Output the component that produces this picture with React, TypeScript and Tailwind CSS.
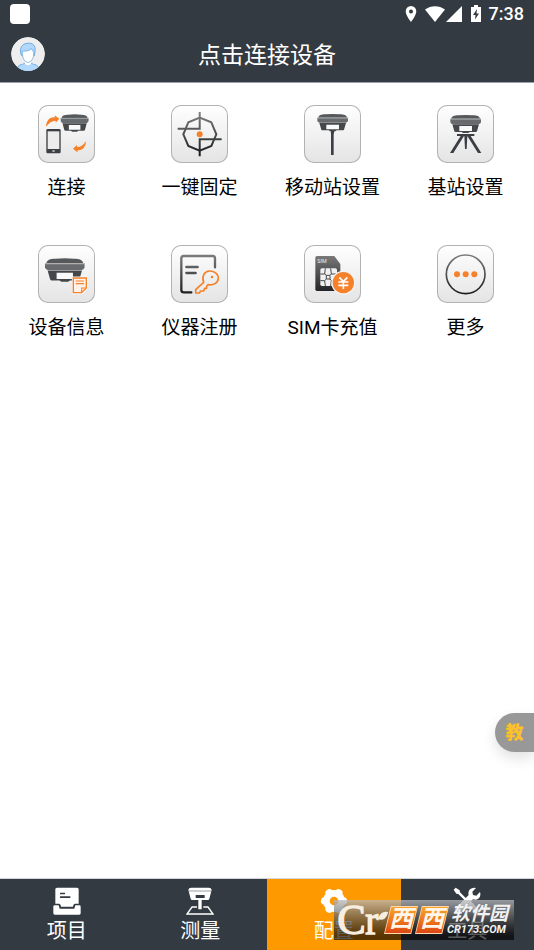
import type { ReactNode } from 'react';

const DARK = '#3b3f44';
const ORANGE = '#f5822b';

// Shared gradient used for the dark strokes of the tile icons
const InkGradient = ({ id }: { id: string }) => (
    <defs>
        <linearGradient id={id} gradientUnits="userSpaceOnUse" x1="0" y1="24" x2="0" y2="150">
            <stop offset="0" stopColor="#808080" />
            <stop offset="1" stopColor="#191b1e" />
        </linearGradient>
    </defs>
);

const TileSvg = ({ children }: { children: ReactNode }) => (
    <svg viewBox="0 0 171 174" className="size-full" fill="none" aria-hidden="true">
        {children}
    </svg>
);

// GNSS receiver head, drawn in a 92x52 box
const Receiver = ({ transform }: { transform: string }) => (
    <g transform={transform}>
        <path d="M3 11C4 4 12 1 24 1Q46 -1 68 1C80 1 88 4 89 11Z" fill="#56595c" />
        <path d="M0 11H92V20Q91 25 86 26H6Q1 25 0 20Z" fill="#686b6e" />
        <path d="M0 12H92" stroke="#c4c4c4" strokeWidth="2" />
        <path d="M6 27H86L80 47Q79 49 76 49H58L54 52H38L34 49H16Q13 49 12 47Z" fill="#45484b" />
        <path d="M27 32H65V46H27Z" fill="#fafafa" />
    </g>
);

const ConnectIcon = () => (
    <TileSvg>
        <Receiver transform="translate(68 28) scale(.91 1)" />
        <path d="M24 65C25 44 38 35 51 37L50 31L64 41L53 53V47C42 47 33 53 24 65Z" fill={ORANGE} />
        <path d="M143 108C145 126 133 136 119 136L118 142L105 131L117 120V126C129 126 137 120 143 108Z" fill={ORANGE} />
        <rect x="25" y="72" width="43" height="73" rx="4" fill={DARK} />
        <rect x="29" y="79" width="35" height="53" fill="#ececec" />
        <rect x="43" y="136" width="7" height="4" fill="#ddd" />
    </TileSvg>
);

const FixIcon = () => (
    <TileSvg>
        <InkGradient id="ink-fix" />
        <g stroke="url(#ink-fix)" strokeWidth="6">
            <path d="M86 38L52 52L37 88L52 123L86 137L121 123L136 88L121 52Z" strokeWidth="6" />
            <path d="M20 71H86.1V21" />
            <path d="M86.1 154V103H152" />
        </g>
        <circle cx="86" cy="88" r="9" fill={ORANGE} />
    </TileSvg>
);

const RoverIcon = () => (
    <TileSvg>
        <path d="M80 76H92L89 88V150H81V88Z" fill={DARK} />
        <Receiver transform="translate(40 27)" />
    </TileSvg>
);

const BaseIcon = () => (
    <TileSvg>
        <path d="M60 87H112V93H60Z" fill={DARK} />
        <path d="M71 93H81L49 144H39ZM91 93H101L133 144H123ZM82 93H91L89 132H84Z" fill={DARK} />
        <Receiver transform="translate(40 30) scale(1 1.04)" />
    </TileSvg>
);

const DeviceInfoIcon = () => (
    <TileSvg>
        <Receiver transform="translate(21 40) scale(1.29 1.35)" />
        <path d="M106 99H145V129L131 143H106Z" fill="#fff1e6" stroke="#f8f8f8" strokeWidth="9" />
        <path d="M106 99H145V129L131 143H106Z" fill="#fff1e6" stroke={ORANGE} strokeWidth="4" />
        <path d="M113 108H138M113 116H138M131 142V129H144" stroke={ORANGE} strokeWidth="3.5" />
    </TileSvg>
);

const RegisterIcon = () => (
    <TileSvg>
        <InkGradient id="ink-reg" />
        <g stroke="url(#ink-reg)" strokeWidth="7" strokeLinecap="round">
            <path d="M132 67V40Q132 33 125 33H38Q31 33 31 40V134Q31 142 39 142H61" />
            <path d="M46 66.1H80M46 84.1L74 84" />
        </g>
        <path
            d="M98 112C91 94 100 79 115 78C129 77 142 86 142 100C141 114 127 122 111 119L107 124V130H101L98 138H89L85 144H74V134Z"
            stroke={ORANGE}
            strokeWidth="5"
            strokeLinejoin="round"
        />
        <circle cx="123" cy="96" r="4" fill={ORANGE} />
    </TileSvg>
);

const SimIcon = () => (
    <TileSvg>
        <InkGradient id="ink-sim" />
        <path d="M39 33H91L109 57V138H39Q34 138 34 133V38Q34 33 39 33Z" fill="url(#ink-sim)" />
        <rect x="49" y="70" width="50" height="53" rx="5" fill="#f1f1f1" />
        <path
            d="M49 87H62L67 91V102L62 107H49M99 87H82L78 91V102L82 107H99M67 91H78M67 102H78M62 87L64 70M82 87L80 70M62 107L64 123M82 107L80 123"
            stroke="#44474a"
            strokeWidth="3"
        />
        <text x="40" y="53" fontSize="16" fill="#eee" fontFamily="Roboto, sans-serif">SIM</text>
        <circle cx="118" cy="113" r="34" fill={ORANGE} stroke="#f4f4f4" strokeWidth="4" />
        <path d="M106 97L118 110L130 97M118 110V132M103 111H133M103 121H133" stroke="#fff" strokeWidth="5" />
    </TileSvg>
);

const MoreIcon = () => (
    <TileSvg>
        <InkGradient id="ink-more" />
        <circle cx="86" cy="88" r="58" stroke="url(#ink-more)" strokeWidth="5" />
        <circle cx="60" cy="88" r="9" fill={ORANGE} />
        <circle cx="86" cy="88" r="9" fill={ORANGE} />
        <circle cx="112" cy="88" r="9" fill={ORANGE} />
    </TileSvg>
);

const tiles = [
    { label: '连接', icon: <ConnectIcon /> },
    { label: '一键固定', icon: <FixIcon /> },
    { label: '移动站设置', icon: <RoverIcon /> },
    { label: '基站设置', icon: <BaseIcon /> },
    { label: '设备信息', icon: <DeviceInfoIcon /> },
    { label: '仪器注册', icon: <RegisterIcon /> },
    { label: 'SIM卡充值', icon: <SimIcon /> },
    { label: '更多', icon: <MoreIcon /> },
];

const ProjectIcon = () => (
    <svg viewBox="0 0 84 84" className="size-7" aria-hidden="true">
        <path fillRule="evenodd" fill="#fff" d="M12 2H72Q77 2 77 7V50H66Q62 50 61 55L60 59H24L23 55Q22 50 18 50H7V7Q7 2 12 2ZM21 17V22H36V17ZM21 28V33H52V28Z" />
        <path fill="#fff" d="M5 55H17L20 65H64L67 55H79Q83 55 83 59V79Q83 83 79 83H5Q1 83 1 79V59Q1 55 5 55Z" />
    </svg>
);

const SurveyIcon = () => (
    <svg viewBox="0 0 84 84" className="size-7" aria-hidden="true">
        <path fill="#fff" d="M7 9Q8 2 16 2H68Q76 2 77 9V11H7ZM8 13H76L70 35Q69 39 66 39H47V67H37V39H18Q15 39 14 35Z" />
        <path fill="#343a42" d="M29 24H56V33H29Z" />
        <path fill="none" stroke="#fff" strokeWidth="4" d="M33 60H18L3 81H81L66 60H52" />
    </svg>
);

const GearIcon = () => (
    <svg viewBox="0 0 84 84" className="size-7" fill="none" stroke="#fff" aria-hidden="true">
        <circle cx="42" cy="42" r="23" strokeWidth="20" />
        <path strokeWidth="23" strokeLinecap="round" d="M68 42H70M14 42H16M55 64.5L56 66.2M29 64.5L28 66.2M55 19.5L56 17.8M29 19.5L28 17.8" />
    </svg>
);

const ToolsIcon = () => (
    <svg viewBox="0 0 84 84" className="size-7" aria-hidden="true">
        <path fill="#fff" d="M2 8L8 2L20 10L21 16L42 37L37 42L16 21L10 20ZM48 48L54 43L79 68Q83 73 79 78Q73 83 68 79L44 55Z" />
        <path fill="#fff" d="M69 3L58 14L60 24L70 26L81 15Q85 29 76 35Q69 40 60 37L25 72Q18 83 9 78Q2 72 7 63L12 59L47 24Q44 14 51 7Q59 0 69 3Z" />
    </svg>
);

const tabs = [
    { label: '项目', icon: <ProjectIcon />, active: false },
    { label: '测量', icon: <SurveyIcon />, active: false },
    { label: '配置', icon: <GearIcon />, active: true },
    { label: '工具', icon: <ToolsIcon />, active: false },
];

const StatusBar = () => (
    <div className="flex h-[27px] items-center justify-between px-[10px]">
        <span className="size-5 rounded bg-white" />
        <div className="flex items-center text-white">
            <svg viewBox="0 0 12 16" className="mr-2 h-4 w-3" aria-label="Location">
                <path fill="currentColor" fillRule="evenodd" d="M6 0A5.3 5.3 0 0 0 .7 5.3C.7 9.5 6 16 6 16S11.3 9.5 11.3 5.3A5.3 5.3 0 0 0 6 0ZM6 3.4A2 2 0 1 1 6 7.4A2 2 0 0 1 6 3.4Z" />
            </svg>
            <svg viewBox="0 0 20 16" className="mr-px h-4 w-5" aria-label="Wi-Fi">
                <path fill="currentColor" d="M0 3.5C6 -1 14 -1 20 3.5L10 16Z" />
            </svg>
            <svg viewBox="0 0 16 16" className="mr-[9px] size-4" aria-label="Signal">
                <path fill="currentColor" d="M16 0V16H0Z" />
            </svg>
            <svg viewBox="0 0 10 17" className="mr-2 h-[17px] w-[10px]" aria-label="Charging">
                <path fill="currentColor" fillRule="evenodd" d="M3 0H7V2H10V17H0V2H3ZM6 4L2 10H4.5L4 14.5L8 8.5H5.5Z" />
            </svg>
            <time className="font-[Roboto,sans-serif] text-lg leading-[26px] font-medium">7:38</time>
        </div>
    </div>
);

const Avatar = () => (
    <svg viewBox="0 0 102 102" className="size-[34px]" aria-hidden="true">
        <clipPath id="avatar-clip"><circle cx="51" cy="51" r="51" /></clipPath>
        <g clipPath="url(#avatar-clip)">
            <circle cx="51" cy="51" r="51" fill="#eeeeef" />
            <path d="M20 104V91Q22 83 34 82L42 78H60L68 82Q80 83 82 91V104Z" fill="#b2d8fb" stroke="#5c9fd9" strokeWidth="2" />
            <path d="M42 70V80Q51 90 60 80V70Z" fill="#fff" />
            <path d="M30 52C25 33 33 20 49 19C65 16 75 26 72 44L70 56H32Z" fill="#b2d8fb" stroke="#5c9fd9" strokeWidth="2.5" />
            <path d="M34 43Q54 43 62 35L68 46C69 65 60 76 51 76C41 76 33 63 34 43Z" fill="#fff" stroke="#5c9fd9" strokeWidth="2" />
        </g>
    </svg>
);

const LogoBlock = () => (
    <span className="-mr-[3px] block h-[28px] w-[34px] bg-[#ffd9b0] p-px [clip-path:polygon(20%_0,100%_0,80%_100%,0_100%)]">
        <span className="block h-full bg-linear-to-b from-[#f9a526] to-[#dc4614] text-center text-[24px] leading-[25px] font-bold text-[#fff5e8] italic [clip-path:polygon(20%_0,100%_0,80%_100%,0_100%)]">
            西
        </span>
    </span>
);

const Watermark = () => (
    <div className="pointer-events-none absolute right-5 bottom-[10px] flex h-10 w-[180px] items-center bg-linear-to-b from-[#b8babd]/75 to-black/65">
        <svg viewBox="0 0 162 120" className="-mr-1 h-10 w-[54px] shrink-0" aria-label="Cr">
            <g fill="#f6eee0" stroke="#f6eee0" strokeWidth="4" fontFamily="'Liberation Serif', serif">
                <text x="10" y="103" fontSize="128">C</text>
                <text x="94" y="103" fontSize="118">r</text>
                <path d="M134 56Q142 34 160 38Q154 62 134 56Z" />
            </g>
        </svg>
        <div className="flex shrink-0">
            <LogoBlock />
            <LogoBlock />
        </div>
        <div className="ml-px flex shrink-0 flex-col whitespace-nowrap text-[#f2f2f2] italic">
            <span className="pl-1 text-[19px] leading-5 font-bold">软件园</span>
            <span className="font-[Roboto,sans-serif] text-[11px] leading-3 font-bold">CR173.COM</span>
        </div>
    </div>
);

const App = () => {
    return (
        <div className="relative flex min-h-screen flex-col bg-white font-[Roboto,'Noto_Sans_CJK_SC',sans-serif]">
            <header className="border-b border-gray-400 bg-[#343a42] pb-[9px]">
                <StatusBar />
                <div className="mt-2 grid grid-cols-[34px_1fr_34px] items-center px-[11px]">
                    <button type="button" aria-label="Account">
                        <Avatar />
                    </button>
                    <h1 className="pt-1 text-center">
                        <button type="button" className="text-[23px] leading-[34px] text-white">点击连接设备</button>
                    </h1>
                </div>
            </header>

            <main className="grow pt-[22px] pr-0.5">
                <div className="grid grid-cols-4 gap-y-[43px]">
                    {tiles.map((tile) => (
                        <button key={tile.label} type="button" className="flex flex-col items-center gap-[11px]">
                            <span className="h-[58px] w-[57px] overflow-hidden rounded-[10px] bg-linear-to-b from-white to-[#e4e4e4] ring-1 ring-[#b2b2b2] ring-inset">
                                {tile.icon}
                            </span>
                            <span className="text-[19px] leading-7 whitespace-nowrap text-black">{tile.label}</span>
                        </button>
                    ))}
                </div>
            </main>

            {/* Floating tutorial button docked to the right edge */}
            <button
                type="button"
                className="absolute right-0 bottom-[198px] h-[39px] w-[39px] rounded-l-full bg-[#989898] text-[18px] font-black text-[#fbc02a] shadow-[0_6px_14px_rgba(0,0,0,0.12)]"
            >
                教
            </button>

            <nav className="grid grid-cols-4 border-t border-gray-300 bg-[#343a42] text-white">
                {tabs.map((tab) => (
                    <button
                        key={tab.label}
                        type="button"
                        aria-pressed={tab.active}
                        className={`flex h-[71px] flex-col items-center pt-2 ${tab.active ? 'bg-[#ff9900]' : ''}`}
                    >
                        {tab.icon}
                        <span className="text-xl leading-8">{tab.label}</span>
                    </button>
                ))}
            </nav>

            <Watermark />
        </div>
    );
};

export default App;
